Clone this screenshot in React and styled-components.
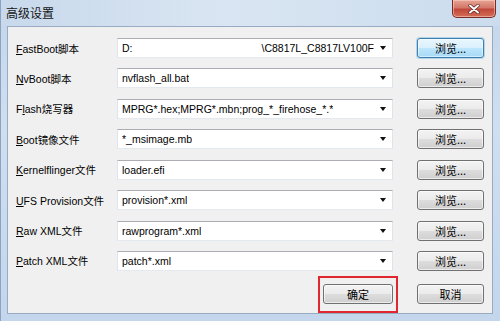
import styled, { createGlobalStyle, css } from "styled-components";

const GlobalStyle = createGlobalStyle`
    html, body {
        margin: 0;
        padding: 0;
        background: #c6d8ec;
    }
    * { box-sizing: border-box; }
`;

const FONT = `"Liberation Sans", "Noto Sans CJK SC", sans-serif`;

const ROWS = [
    { key: "F", rest: "astBoot", cjk: "脚本", value: "D:", tail: "\\C8817L_C8817LV100F" },
    { key: "N", rest: "vBoot", cjk: "脚本", value: "nvflash_all.bat" },
    { pre: "F", key: "l", rest: "ash", cjk: "烧写器", value: "MPRG*.hex;MPRG*.mbn;prog_*_firehose_*.*" },
    { key: "B", rest: "oot", cjk: "镜像文件", value: "*_msimage.mb" },
    { key: "K", rest: "ernelflinger", cjk: "文件", value: "loader.efi" },
    { key: "U", rest: "FS Provision", cjk: "文件", value: "provision*.xml" },
    { key: "R", rest: "aw XML", cjk: "文件", value: "rawprogram*.xml" },
    { key: "P", rest: "atch XML", cjk: "文件", value: "patch*.xml" },
];

export default function App() {
    return (
        <>
            <GlobalStyle />
            <Window>
                <TitleBar>
                    <Title>高级设置</Title>
                    <CloseButton aria-label="close">
                        <svg width="12" height="10" viewBox="0 0 12 10">
                            <path d="M2 1.5 L10 8.5 M10 1.5 L2 8.5" stroke="#5a1a1a" strokeWidth="3.2" strokeLinecap="round" />
                            <path d="M2 1.5 L10 8.5 M10 1.5 L2 8.5" stroke="#ffffff" strokeWidth="2" strokeLinecap="round" />
                        </svg>
                    </CloseButton>
                </TitleBar>
                <Client>
                    <Form>
                        {ROWS.map((row, i) => (
                            <Row key={i}>
                                <Label>
                                    {row.pre}<Key>{row.key}</Key>{row.rest}{row.cjk}
                                </Label>
                                <Combo>
                                    <Value>{row.value}</Value>
                                    {row.tail && <Tail>{row.tail}</Tail>}
                                    <Arrow />
                                </Combo>
                                <Button $focused={i === 0}>浏览...</Button>
                            </Row>
                        ))}
                    </Form>
                    <Footer>
                        <Marked>
                            <Button $wide>确定</Button>
                        </Marked>
                        <Button>取消</Button>
                    </Footer>
                </Client>
            </Window>
        </>
    );
}

const Window = styled.div`
    width: 500px;
    height: 321px;
    display: flex;
    flex-direction: column;
    background: linear-gradient(to bottom, #c4d6eb 0%, #cfdff0 40%, #c3d6ec 100%);
    border-left: 1px solid #8da3bf;
    font-family: ${FONT};
    overflow: hidden;
`;

const TitleBar = styled.div`
    height: 26px;
    flex: none;
    display: flex;
    align-items: flex-start;
    justify-content: space-between;
    padding-left: 5px;
    background: linear-gradient(to right, #c8d9ec 0%, #d9e5f2 45%, #cbdcee 100%);
`;

const Title = styled.div`
    font-family: "Noto Sans CJK SC", sans-serif;
    font-size: 12px;
    line-height: 26px;
    color: #151515;
`;

const CloseButton = styled.div`
    width: 44px;
    height: 18px;
    margin-right: 4px;
    display: flex;
    align-items: center;
    justify-content: center;
    border: 1px solid #7a2b24;
    border-top: none;
    border-radius: 0 0 5px 5px;
    background: linear-gradient(to bottom, #e8a493 0%, #d2786a 45%, #c0473a 55%, #d46e55 100%);
    box-shadow: inset 0 0 0 1px rgba(255, 220, 210, 0.5);
`;

const Client = styled.div`
    flex: 1;
    margin: 0 7px 7px 6px;
    background: #f0f0f0;
    border: 1px solid #98abc3;
    padding: 11px 8px 0 8px;
    display: flex;
    flex-direction: column;
`;

const Form = styled.div`
    display: flex;
    flex-direction: column;
    gap: 10.43px;
`;

const Row = styled.div`
    display: grid;
    grid-template-columns: 101px 276px 67px;
    column-gap: 0;
    height: 20px;
    align-items: center;

    & > :last-child {
        margin-left: 24px;
    }
`;

const Label = styled.div`
    font-size: 10.5px;
    color: #000;
    white-space: nowrap;
`;

const Key = styled.span`
    text-decoration: underline;
    text-underline-offset: 1px;
`;

const Combo = styled.div`
    height: 20px;
    display: flex;
    align-items: center;
    padding: 0 6px 0 4px;
    background: #fff;
    border: 1px solid #e2e3ea;
    border-top-color: #abadb3;
    border-bottom-color: #e3e9ef;
    font-size: 10.5px;
    color: #000;
`;

const Value = styled.span`
    white-space: nowrap;
    overflow: hidden;
`;

const Tail = styled.span`
    margin-left: auto;
    white-space: nowrap;
`;

const Arrow = styled.span`
    margin-left: auto;
    flex: none;
    width: 0;
    height: 0;
    border-left: 3.5px solid transparent;
    border-right: 3.5px solid transparent;
    border-top: 4px solid #111;

    ${Tail} + & {
        margin-left: 6px;
    }
`;

const Button = styled.div`
    width: ${({ $wide }) => ($wide ? "70px" : "67px")};
    height: 20px;
    display: flex;
    align-items: center;
    justify-content: center;
    font-family: "Noto Sans CJK SC", sans-serif;
    font-size: 11px;
    color: #000;
    border: 1px solid #707070;
    border-radius: 3px;
    background: linear-gradient(to bottom, #f3f3f3 0%, #ebebeb 50%, #dddddd 51%, #cfcfcf 100%);
    box-shadow: inset 0 0 0 1px rgba(255, 255, 255, 0.6);

    ${({ $focused }) =>
        $focused &&
        css`
            border-color: #3c7fb1;
            background: linear-gradient(to bottom, #eaf6fd 0%, #d9f0fc 50%, #bee6fd 51%, #a7d9f5 100%);
            box-shadow: inset 0 0 0 1px rgba(255, 255, 255, 0.5), 0 0 0 1px rgba(70, 160, 220, 0.35);
        `}
`;

const Footer = styled.div`
    margin-top: 13px;
    display: flex;
    justify-content: flex-end;
    gap: 24px;
`;

const Marked = styled.div`
    position: relative;

    &::after {
        content: "";
        position: absolute;
        top: -8px;
        bottom: -9px;
        left: -5px;
        right: -5px;
        border: 2px solid #e0262e;
        pointer-events: none;
    }
`;
